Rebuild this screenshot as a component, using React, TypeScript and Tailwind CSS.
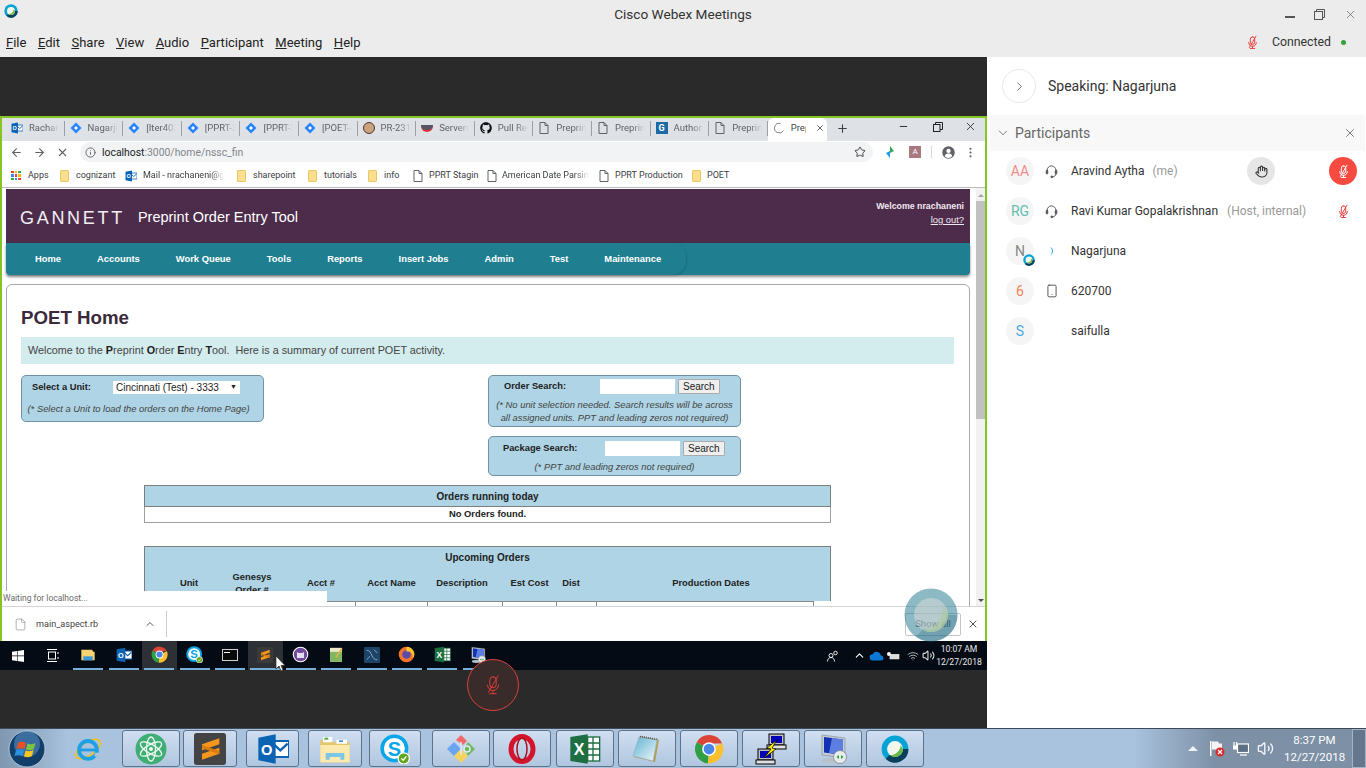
import React from "react";
import { ArrowLeft, ArrowRight, ChevronDown, ChevronRight, ChevronUp, File, Hand, Info, Minus, MoreVertical, Plus, Smartphone, Star, Volume2, Wifi, X } from "lucide-react";
import { FaGithub } from "react-icons/fa";

const ui = "font-['Roboto',sans-serif]";
const ar = "font-['Liberation_Sans',Arial,sans-serif]";

function MutedMic({ className = "", color = "#e8413a", size = 16, sw = 1.6 }: { className?: string; color?: string; size?: number; sw?: number }) {
  return (
    <svg width={size} height={size} viewBox="0 0 24 24" fill="none" stroke={color} strokeWidth={sw} strokeLinecap="round" className={className}>
      <rect x="8.5" y="3" width="7" height="12" rx="3.5" />
      <path d="M6 12a6 6 0 0 0 12 0" />
      <path d="M12 18v3M8.5 21.5h7" />
      <path d="M17.5 2 7 20" />
    </svg>
  );
}
function Headset() {
  return (
    <svg width="15" height="15" viewBox="0 0 24 24" fill="none" stroke="#555" strokeWidth="1.500" strokeLinecap="round">
      <path d="M5 13V10a7 7 0 0 1 14 0v3" />
      <rect x="3.500" y="10" width="2.500" height="6" rx="1.250" fill="#555" />
      <rect x="18" y="10" width="2.500" height="6" rx="1.250" fill="#555" />
      <path d="M19 16c0 3-2.500 4.500-5 4.500" />
      <circle cx="12.500" cy="20.500" r="1.500" fill="#555" />
    </svg>
  );
}
function WebexLogo({ size = 16 }: { size?: number }) {
  return (
    <svg width={size} height={size} viewBox="0 0 24 24">
      <circle cx="12" cy="12" r="11.500" fill="#05a3d6" />
      <path d="M23.500 12A11.500 11.500 0 0 1 4 20.300L8 16.500A6.500 6.500 0 0 0 18.500 12Z" fill="#0a3f5c" />
      <circle cx="12" cy="12" r="6.800" fill="#f4f7ee" />
      <path d="M18.800 12A6.800 6.800 0 0 1 7.500 17.100C11.500 17.500 15.500 15.500 17 9Z" fill="#68b846" />
    </svg>
  );
}
function Outlook({ size = 13 }: { size?: number }) {
  return (
    <svg width={size} height={size} viewBox="0 0 24 24">
      <rect x="11" y="6" width="13" height="12" fill="#fff" stroke="#0a64b4" strokeWidth="1.500" />
      <path d="M12 8l5.500 5L23 8" fill="none" stroke="#0a64b4" strokeWidth="1.800" />
      <path d="M1 3.500 14 1v22L1 20.500Z" fill="#0a64b4" />
      <text x="7.300" y="16.300" textAnchor="middle" fontSize="11" fontWeight="700" fill="#fff" fontFamily="Liberation Sans">O</text>
    </svg>
  );
}
function Jira() {
  return (
    <svg width="12" height="12" viewBox="0 0 24 24">
      <path d="M12 1 23 12 12 23 1 12Z" fill="#2684ff" />
      <path d="M12 8 16 12 12 16 8 12Z" fill="#fff" />
    </svg>
  );
}
function Chrome({ size = 20 }: { size?: number }) {
  return (
    <svg width={size} height={size} viewBox="0 0 24 24">
      <path d="M12 12 2.200 6.500A11.500 11.500 0 0 1 22.500 7.500L12 7.500Z" fill="#db4437" />
      <path d="M12 12 22.500 7.500A11.500 11.500 0 0 1 11 23.500Z" fill="#fbc02d" />
      <path d="M12 12 11 23.500A11.500 11.500 0 0 1 2.200 6.500Z" fill="#2f9e44" />
      <circle cx="12" cy="12" r="5.500" fill="#fff" />
      <circle cx="12" cy="12" r="4.300" fill="#4a86e8" />
    </svg>
  );
}
function Sublime({ size = 16, plate = "#444" }: { size?: number; plate?: string }) {
  return (
    <svg width={size} height={size} viewBox="0 0 24 24">
      <rect x="0" y="0" width="24" height="24" rx="2" fill={plate} />
      <path d="M19 4 6 8.500v4.500l13-4.500ZM19 11 6 15.500V20l13-4.500Z" fill="#f7961d" />
      <path d="M6 9 19 13.500V16L6 11.500Z" fill="#d97b0e" />
    </svg>
  );
}
function Skype({ size = 18 }: { size?: number }) {
  return (
    <span className="relative inline-flex items-center justify-center" style={{ width: size, height: size }}>
      <svg width={size} height={size} viewBox="0 0 24 24">
        <circle cx="11.500" cy="11.500" r="9.800" fill="#fff" stroke="#08a5e8" strokeWidth="2.800" />
        <text x="11.500" y="17.500" textAnchor="middle" fontSize="16" fontWeight="700" fill="#08a5e8" fontFamily="Liberation Sans">S</text>
        <circle cx="19" cy="19.500" r="4.500" fill="#5fa51d" stroke="#fff" strokeWidth="1" />
        <path d="M17 19.500l1.500 1.500 2.500-3" fill="none" stroke="#fff" strokeWidth="1" />
      </svg>
    </span>
  );
}
function Excel({ size = 20 }: { size?: number }) {
  return (
    <svg width={size} height={size} viewBox="0 0 24 24">
      <rect x="11" y="3" width="12" height="18" fill="#fff" stroke="#1d6f42" strokeWidth="1" />
      <path d="M14 3v18M18 3v18M11 7.500h12M11 12h12M11 16.500h12" stroke="#1d6f42" strokeWidth="1" />
      <path d="M1 3 14 1v22L1 21Z" fill="#1d6f42" />
      <text x="7.500" y="16.500" textAnchor="middle" fontSize="12" fontWeight="700" fill="#fff" fontFamily="Liberation Sans">X</text>
    </svg>
  );
}
function Folder({ size = 18 }: { size?: number }) {
  return (
    <svg width={size} height={size} viewBox="0 0 24 24">
      <path d="M1 5h8l2 2h12v15H1Z" fill="#e5c66d" />
      <path d="M3 3h7v4H3ZM13 5h8v3h-8Z" fill="#fff" />
      <rect x="4" y="3.500" width="3" height="1.500" fill="#4cae4c" />
      <rect x="15" y="5.500" width="3" height="1.200" fill="#3b8bd8" />
      <path d="M1 9h22v13H1Z" fill="#fbe9ae" />
      <path d="M5 20v-5h14v5h-3v-2H8v2Z" fill="#7cc7e8" />
    </svg>
  );
}
function BookmarkFolder() {
  return <span className="block w-[9px] h-[12px] bg-[#fbdf8e] border border-[#e6c869] rounded-[1px]" />;
}
function Atom() {
  return (
    <svg width="32" height="32" viewBox="0 0 32 32">
      <circle cx="16" cy="16" r="15.500" fill="#3fae74" />
      <g fill="none" stroke="#eaf7ef" strokeWidth="1.300">
        <ellipse cx="16" cy="16" rx="12" ry="4.500" transform="rotate(30 16 16)" />
        <ellipse cx="16" cy="16" rx="12" ry="4.500" transform="rotate(-30 16 16)" />
        <ellipse cx="16" cy="16" rx="12" ry="4.500" transform="rotate(90 16 16)" />
      </g>
      <circle cx="16" cy="16" r="2" fill="#eaf7ef" />
    </svg>
  );
}
function GitTile() {
  return (
    <svg width="32" height="32" viewBox="0 0 32 32">
      <path d="M2 16 9 9l7 7-7 7Z" fill="#6aa5f2" />
      <path d="M16 2l6 6-4 4-7-5Z" fill="#f06a6a" />
      <path d="M23 9l7 7-7 7-4-7Z" fill="#71b85c" />
      <path d="M9 23l7-7 7 7-7 7Z" fill="#f4d35e" />
      <circle cx="22" cy="16" r="3" fill="none" stroke="#dfeaf4" strokeWidth="1.500" />
      <path d="M16 9v13" stroke="#dfeaf4" strokeWidth="1.500" />
    </svg>
  );
}
function Opera({ size = 30 }: { size?: number }) {
  return (
    <svg width={size} height={size} viewBox="0 0 30 30">
      <ellipse cx="15" cy="15" rx="11" ry="12.500" fill="none" stroke="#d4142a" strokeWidth="5" />
      <ellipse cx="15" cy="15" rx="5" ry="11" fill="none" stroke="#a80f20" strokeWidth="1.500" />
    </svg>
  );
}
function Notepad() {
  return (
    <svg width="32" height="32" viewBox="0 0 32 32">
      <path d="M9 3 28 7 24 29 3 24Z" fill="#b8860b" opacity=".7" />
      <path d="M8 4 26 7 22 28 2 23Z" fill="url(#np)" stroke="#8fb2c4" strokeWidth=".600" />
      <defs><linearGradient id="np" x1="0" y1="0" x2="1" y2="1"><stop stopColor="#5fb2d0" /><stop offset="1" stopColor="#eef7fb" /></linearGradient></defs>
      <path d="M9 3.500 27 6.500" stroke="#555" strokeWidth="1.600" strokeDasharray="1 1" />
    </svg>
  );
}
function Putty() {
  const Box = ({ x, y }: { x: number; y: number }) => (
    <g transform={`translate(${x} ${y})`}>
      <rect x="2" y="0" width="15" height="11" fill="#c0c0c0" stroke="#000" strokeWidth="1" />
      <rect x="4" y="2" width="11" height="7" fill="#0000b8" />
      <rect x="0" y="11" width="19" height="4" fill="#e0e0e0" stroke="#000" strokeWidth="1" />
    </g>
  );
  return (
    <svg width="32" height="32" viewBox="0 0 32 32">
      <Box x={12} y={1} />
      <Box x={1} y={16} />
      <path d="M22 7 12 15l4 1-7 9 12-9-4-1 5-8Z" fill="#ffef00" stroke="#000" strokeWidth=".700" />
    </svg>
  );
}
function Rdp({ size = 32 }: { size?: number }) {
  return (
    <svg width={size} height={size} viewBox="0 0 32 32">
      <path d="M5 2 28 5v20L5 22Z" fill="#c6cdd3" stroke="#7c8791" strokeWidth=".600" />
      <path d="M7 4 26 6.500V22L7 19.500Z" fill="#1231b5" />
      <path d="M15 5 26 6.500V22L12 20Z" fill="#5b7ee0" />
      <ellipse cx="13" cy="27.500" rx="8" ry="2.500" fill="#b9c1c8" />
      <circle cx="23" cy="24" r="6.500" fill="#e8ecea" stroke="#7c8791" strokeWidth=".800" />
      <path d="M19.500 24l2.500-2v4ZM26.500 24 24 22v4Z" fill="#2f9e44" />
    </svg>
  );
}
function Doc() {
  return (
    <svg width="10" height="12" viewBox="0 0 10 12" fill="none" stroke="#5f6368" strokeWidth="1">
      <path d="M1 .500h5l3 3v8H1Z" />
      <path d="M6 .500v3h3" />
    </svg>
  );
}

const tabs: { icon: React.ReactNode; text: string }[] = [
  { icon: <Outlook size={12} />, text: "Rachan" },
  { icon: <Jira />, text: "Nagarju" },
  { icon: <Jira />, text: "[Iter403" },
  { icon: <Jira />, text: "[PPRT-3" },
  { icon: <Jira />, text: "[PPRT-3" },
  { icon: <Jira />, text: "[POET-4" },
  { icon: <span className="block w-[12px] h-[12px] rounded-full bg-[#c9a27e] border border-[#4a3a2c]" />, text: "PR-231" },
  { icon: <span className="block w-[12px] h-[7px] rounded-b-full border-b-2 border-[#d33] bg-[#556]" />, text: "Servers" },
  { icon: <FaGithub size={12} color="#111" />, text: "Pull Rec" },
  { icon: <Doc />, text: "Preprin" },
  { icon: <Doc />, text: "Preprin" },
  { icon: <span className="flex w-[12px] h-[12px] items-center justify-center bg-[#1b6aa5] text-white text-[9px] leading-none font-bold">G</span>, text: "Author" },
  { icon: <Doc />, text: "Preprin" },
];

const bookmarks: { w: string; icon: React.ReactNode; text: string; gap: string; tw?: string }[] = [
  { w: "w-[49px]", icon: <span className="grid grid-cols-3 gap-[1px] w-[10px]">{["#e94235","#fbbc04","#34a853","#4285f4","#e94235","#fbbc04","#34a853","#4285f4","#e94235"].map((c, i) => <span key={i} className="block w-[2.500px] h-[2.500px]" style={{ background: c }} />)}</span>, text: "Apps", gap: "gap-[7px]" },
  { w: "w-[65px]", icon: <BookmarkFolder />, text: "cognizant", gap: "gap-[7px]" },
  { w: "w-[112px]", icon: <Outlook size={12} />, text: "Mail - nrachaneni@g", gap: "gap-[6px]", tw: "[mask-image:linear-gradient(to_right,black_85%,transparent)]" },
  { w: "w-[71px]", icon: <BookmarkFolder />, text: "sharepoint", gap: "gap-[7px]" },
  { w: "w-[60px]", icon: <BookmarkFolder />, text: "tutorials", gap: "gap-[7px]" },
  { w: "w-[45px]", icon: <BookmarkFolder />, text: "info", gap: "gap-[7px]" },
  { w: "w-[74px]", icon: <Doc />, text: "PPRT Stagin", gap: "gap-[6px]" },
  { w: "w-[112px]", icon: <Doc />, text: "American Date Parsin", gap: "gap-[5px]", tw: "[mask-image:linear-gradient(to_right,black_85%,transparent)]" },
  { w: "w-[93px]", icon: <Doc />, text: "PPRT Production", gap: "gap-[6px]" },
  { w: "w-[60px]", icon: <BookmarkFolder />, text: "POET", gap: "gap-[6px]" },
];

const nav = ["Home", "Accounts", "Work Queue", "Tools", "Reports", "Insert Jobs", "Admin", "Test", "Maintenance"];

const cols = "grid grid-cols-[16px_56px_70px_68px_73px_75px_53px_40px_230px]";

function HeaderCell({ children, pr = "" }: { children: React.ReactNode; pr?: string }) {
  return <div className={`text-center ${pr}`}>{children}</div>;
}

function Browser() {
  return (
    <div className="h-[525px] flex flex-col border-t-2 border-x-2 border-[#84c425] bg-white">
      {/* tab strip */}
      <div className={`h-[23px] bg-[#dee1e6] flex items-center pl-[4px] ${ui}`}>
        {tabs.map((t, i) => (
          <div key={i} className="w-[58.600px] h-[15px] mb-[3px] flex items-center pl-[5px] gap-[6px] border-r border-[#9aa0a6]">
            <span className="w-[12px] flex justify-center shrink-0">{t.icon}</span>
            <span className="w-[30px] overflow-hidden whitespace-nowrap text-[9.500px] text-[#5f6368] [mask-image:linear-gradient(to_right,black_60%,transparent)]">{t.text}</span>
          </div>
        ))}
        <div className="w-[59px] h-full pb-[3px] bg-white rounded-t-[6px] flex items-center pl-[5px] gap-[6px]">
          <svg width="12" height="12" viewBox="0 0 12 12" fill="none" stroke="#7a8086" strokeWidth="1"><path d="M7.500 1.500a4.800 4.800 0 1 0 3 7" /></svg>
          <span className="w-[15px] overflow-hidden text-[9.500px] text-[#45494d]">Prep</span>
          <X size={10} color="#444" strokeWidth={2} className="ml-[3px]" />
        </div>
        <Plus size={13} color="#3c4043" className="ml-[9px] mb-[3px]" />
        <div className="ml-auto flex items-center pr-[8px] mb-[6px]">
          <Minus size={11} color="#222" />
          <svg width="10" height="10" viewBox="0 0 10 10" fill="none" stroke="#222" strokeWidth="1" className="ml-[23.500px]"><rect x=".500" y="2.500" width="6.500" height="7" /><path d="M2.500 2.500v-2h7v7H7" /></svg>
          <X size={13} color="#222" strokeWidth={1.500} className="ml-[21.500px]" />
        </div>
      </div>
      {/* toolbar */}
      <div className={`h-[22px] bg-white flex items-center ${ui}`}>
        <div className="w-[78px] flex items-center pl-[8px] gap-[10px] shrink-0">
          <ArrowLeft size={13} color="#5f6368" />
          <ArrowRight size={13} color="#5f6368" />
          <X size={13} color="#5f6368" />
        </div>
        <div className="w-[793px] h-[20px] bg-[#f1f3f4] rounded-full flex items-center pl-[5px] pr-[7px]">
          <Info size={11} color="#5f6368" />
          <span className="ml-[6px] mt-[1px] text-[10.400px] text-[#202124]">localhost<span className="text-[#80868b]">:3000/home/nssc_fin</span></span>
          <Star size={12} color="#444" className="ml-auto" />
        </div>
        <div className="flex items-center flex-1 pl-[12px]">
          <svg width="10" height="12" viewBox="0 0 10 12"><path d="M5 0 9 5 5 7Z" fill="#34a853" /><path d="M5 12 1 7l4-2Z" fill="#1a9be8" /></svg>
          <span className="ml-[14px] w-[12px] h-[12px] bg-[#a87a7f] flex items-center justify-center text-[8px] text-white leading-none">A</span>
          <span className="ml-[10px] w-px h-[12px] bg-[#d8d8d8]" />
          <svg width="13" height="13" viewBox="0 0 24 24" className="ml-[10px]">
            <circle cx="12" cy="12" r="11.500" fill="#5f6368" />
            <circle cx="12" cy="9" r="4" fill="#fff" />
            <path d="M5 19c1-4 4-5 7-5s6 1 7 5a9 9 0 0 1-14 0Z" fill="#fff" />
          </svg>
          <MoreVertical size={13} color="#5f6368" className="ml-[9px]" />
        </div>
      </div>
      {/* bookmarks */}
      <div className={`h-[25px] pt-[1px] bg-white flex items-center pl-[9px] text-[9px] text-[#3c4043] border-b border-[#bbb] ${ui}`}>
        {bookmarks.map((b, i) => (
          <div key={i} className={`${b.w} flex items-center ${b.gap} whitespace-nowrap`}>
            {b.icon}
            <span className={b.tw ?? ""}>{b.text}</span>
          </div>
        ))}
      </div>
      {/* page */}
      <div className="flex-1 min-h-0 relative flex overflow-hidden">
        <Page />
        <div className="w-[9px] shrink-0 bg-[#f1f1f1] flex flex-col items-center">
          <span className="mt-[6px] w-0 h-0 border-x-[3px] border-x-transparent border-b-[3px] border-b-[#a3a3a3]" />
          <span className="mt-[4px] w-full h-[218px] bg-[#c1c1c1]" />
          <span className="mt-auto mb-[4px] w-0 h-0 border-x-[3px] border-x-transparent border-t-[3px] border-t-[#505050]" />
        </div>
        <div className={`absolute left-0 bottom-0 w-[325px] h-[15px] bg-white flex items-center pl-[1px] text-[8.500px] text-[#6a6a6a] z-10 ${ui}`}>Waiting for localhost...</div>
      </div>
      {/* downloads */}
      <div className={`h-[35px] shrink-0 bg-white border-t border-[#d4d4d4] flex items-center ${ui}`}>
        <File size={13} color="#888" strokeWidth={1.200} className="ml-[12px]" />
        <span className="ml-[9px] mt-[2px] text-[9.100px] text-[#444]">main_aspect.rb</span>
        <ChevronUp size={12} color="#555" className="ml-[46px]" />
        <span className="ml-[10px] w-px h-[26px] bg-[#ccc]" />
        <span className="ml-auto w-[56px] h-[23px] border border-[#c5c5c5] rounded-[2px] flex items-center justify-center text-[9.500px] text-[#444]">Show all</span>
        <X size={12} color="#555" strokeWidth={2} className="mx-[6px]" />
      </div>
    </div>
  );
}

function Page() {
  const box = "bg-[#aed4e5] border border-[#6f93a5] rounded-[5px]";
  const tbl = "bg-[#aed4e5] border border-[#7d7d7d]";
  const btn = "h-[15px] px-[4px] bg-[#efefef] border border-[#aaa] rounded-[1px] text-[10px] leading-none text-[#222] flex items-center";
  return (
    <div className={`w-[974px] shrink-0 pl-[4px] pr-[6px] overflow-hidden ${ar}`}>
      <div className="h-[54px] pt-[4px] mt-[1px] bg-[#4d2c4b] flex items-center pl-[14px] pr-[6px]">
        <span className="text-[18px] tracking-[2.700px] text-[#f3eef3] font-light">GANNETT</span>
        <span className="ml-[13px] text-[14.500px] text-white">Preprint Order Entry Tool</span>
        <div className="ml-auto text-right leading-[14px] text-[#f0e8f0] -mt-[11px]">
          <div className="text-[8.800px] font-bold">Welcome nrachaneni</div>
          <div className="text-[9.400px] underline">log out?</div>
        </div>
      </div>
      <div className="h-[32px] bg-[#1f7f91] shadow-[0_2px_3px_rgba(0,0,0,0.45)] rounded-b-[4px]">
        <div className="w-[680px] h-full rounded-r-[14px] shadow-[1px_1px_2px_rgba(0,0,0,0.15)] flex items-center pl-[11px] text-[9.400px] font-bold text-white">
          {nav.map((n) => <span key={n} className="px-[18px] whitespace-nowrap">{n}</span>)}
        </div>
      </div>
      <div className="mt-[9px] border border-[#a8a8a8] rounded-t-[6px] px-[14px] h-[340px]">
        <h1 className="mt-[22px] h-[22px] leading-[22px] text-[18.700px] font-bold text-[#3a2a3a]">POET Home</h1>
        <div className="mt-[8px] w-[933px] h-[27px] bg-[#d3ecee] flex items-center pl-[7px] text-[10.800px] text-[#444]">
          <span>Welcome to the <b className="text-[#222]">P</b>reprint <b className="text-[#222]">O</b>rder <b className="text-[#222]">E</b>ntry <b className="text-[#222]">T</b>ool.&nbsp; Here is a summary of current POET activity.</span>
        </div>
        <div className="mt-[11px] flex items-start text-[#222]">
          <div className={`w-[243px] h-[47px] ${box}`}>
            <div className="flex items-center mt-[5px] h-[13px]">
              <span className="ml-[10px] w-[81px] text-[9.300px] font-bold">Select a Unit:</span>
              <span className="w-[127px] h-[13px] bg-white flex items-center justify-between px-[3px] text-[10px] text-[#222]">Cincinnati (Test) - 3333<span className="text-[7px]">▼</span></span>
            </div>
            <div className="mt-[8px] pr-[8px] text-center text-[9.400px] italic text-[#444]">(* Select a Unit to load the orders on the Home Page)</div>
          </div>
          <div className="ml-[224px] w-[253px] flex flex-col gap-[9px]">
            <div className={`h-[52px] ${box}`}>
              <div className="flex items-center mt-[3px] h-[15px]">
                <span className="ml-[15px] w-[96px] text-[9.300px] font-bold">Order Search:</span>
                <span className="w-[75px] h-[15px] bg-white" />
                <span className={`ml-[3px] ${btn}`}>Search</span>
              </div>
              <div className="mt-[4px] text-center text-[9.400px] leading-[13px] italic text-[#444] whitespace-nowrap">(* No unit selection needed. Search results will be across<br />all assigned units. PPT and leading zeros not required)</div>
            </div>
            <div className={`h-[40px] ${box}`}>
              <div className="flex items-center mt-[4px] h-[15px]">
                <span className="ml-[14px] w-[102px] text-[9.300px] font-bold">Package Search:</span>
                <span className="w-[75px] h-[15px] bg-white" />
                <span className={`ml-[3px] ${btn}`}>Search</span>
              </div>
              <div className="mt-[4px] text-center text-[9.400px] leading-[13px] italic text-[#444]">(* PPT and leading zeros not required)</div>
            </div>
          </div>
        </div>
        <div className="mt-[9px] ml-[123px] w-[687px] text-[9.400px] font-bold text-[#222]">
          <div className={`${tbl} h-[22px] flex items-center justify-center text-[10px]`}>Orders running today</div>
          <div className="h-[16px] bg-white border-x border-b border-[#a0a0a0] flex items-center justify-center">No Orders found.</div>
          <div className={`mt-[23px] ${tbl} border-b-0 h-[55px]`}>
            <div className="h-[21px] flex items-center justify-center text-[10px]">Upcoming Orders</div>
            <div className={`${cols} items-center h-[29px] leading-[13px]`}>
              <span />
              <HeaderCell>Unit</HeaderCell>
              <HeaderCell>Genesys<br />Order #</HeaderCell>
              <HeaderCell>Acct #</HeaderCell>
              <HeaderCell>Acct Name</HeaderCell>
              <HeaderCell pr="pr-[7px]">Description</HeaderCell>
              <HeaderCell>Est Cost</HeaderCell>
              <HeaderCell pr="pr-[10px]">Dist</HeaderCell>
              <HeaderCell>Production Dates</HeaderCell>
            </div>
          </div>
          <div className="grid grid-cols-[16px_56px_70px_69px_72px_75px_54px_40px_218px] h-[6px]">
            <span />
            {[0, 1, 2, 3, 4, 5, 6].map((i) => <span key={i} className="border-l border-t border-[#888]" />)}
            <span className="border-x border-t border-[#888]" />
          </div>
        </div>
      </div>
    </div>
  );
}

const remoteApps: { icon: React.ReactNode; active?: boolean; label?: string }[] = [
  { icon: <svg width="16" height="14" viewBox="0 0 24 20"><path d="M2 2h16l2 3h2v13H2Z" fill="#f4d370" /><path d="M5 18v-6h14v6" fill="#3b9ad9" /></svg> },
  { icon: <Outlook size={16} /> },
  { icon: <Chrome size={17} />, active: true },
  { icon: <Skype size={17} /> },
  { icon: <span className="block w-[16px] h-[12px] bg-[#0a0a0a] border border-[#cfcfcf]"><span className="block w-[6px] h-[1px] bg-white mt-[2px] ml-[1px]" /></span> },
  { icon: <Sublime size={16} plate="#3a3a3a" />, active: true },
  { icon: <svg width="17" height="17" viewBox="0 0 24 24"><circle cx="12" cy="12" r="11" fill="#fff" /><circle cx="12" cy="12" r="9.500" fill="#6f4a9a" /><path d="M7 8l2 2h6l2-2v9H7Z" fill="#e6def2" /></svg> },
  { icon: <svg width="16" height="17" viewBox="0 0 24 24"><rect x="3" y="2" width="18" height="21" fill="#eee9c8" /><rect x="3" y="8" width="18" height="15" fill="#7fb860" /><path d="M12 16 21 3" stroke="#e0b44a" strokeWidth="2.500" /></svg> },
  { icon: <svg width="16" height="16" viewBox="0 0 24 24"><rect width="24" height="24" rx="2" fill="#1d4466" /><path d="M4 5c5 0 6 4 8 8s3 6 8 6M15 4l5 5M4 19l5-5" stroke="#8fb4d6" strokeWidth="1.300" fill="none" /></svg> },
  { icon: <svg width="17" height="17" viewBox="0 0 24 24"><circle cx="12" cy="12" r="11" fill="#f2742b" /><circle cx="12" cy="12" r="6" fill="#5d4ba8" /><path d="M12 1a11 11 0 0 1 11 11c0 3-1 4-2 5 0-6-3-10-9-9Z" fill="#ffc52f" /></svg> },
  { icon: <Excel size={17} /> },
  { icon: <Rdp size={18} /> },
];

function RemoteTaskbar() {
  return (
    <div className={`h-[29px] bg-[#050b14] flex items-stretch pr-[4px] ${ui}`}>
      <div className="w-[35.400px] flex items-center justify-center">
        <svg width="12" height="12" viewBox="0 0 12 12" fill="#fff"><path d="M0 1.700 5 1v4.600H0ZM5.600.9 12 0v5.600H5.600ZM0 6.200h5v4.700l-5-.7ZM5.600 6.200H12V12l-6.400-.9Z" /></svg>
      </div>
      <div className="w-[35.400px] flex items-center justify-center">
        <svg width="13" height="13" viewBox="0 0 13 13" fill="none" stroke="#fff" strokeWidth="1"><rect x="1.500" y="3" width="7" height="7" /><path d="M0 .5h10M0 12.500h10M11 3v2M11 8v2" /></svg>
      </div>
      {remoteApps.map((a, i) => (
        <div key={i} className={`w-[35.400px] flex flex-col items-center ${a.active ? "bg-[#2d3035]" : ""}`}>
          <div className="flex-1 flex items-center justify-center">{a.icon}</div>
          <span className="w-[30px] h-[2px] bg-[#76b0d8]" />
        </div>
      ))}
      <div className="ml-auto flex items-center text-white">
        <svg width="12" height="12" viewBox="0 0 24 24" fill="none" stroke="#fff" strokeWidth="1.800" className="mr-[14px]"><circle cx="8" cy="11" r="4" /><path d="M1 23c0-5 3-8 7-8s7 3 7 8" /><circle cx="17" cy="6" r="3.500" /></svg>
        <ChevronUp size={13} color="#fff" className="mr-[3px]" />
        <svg width="15" height="10" viewBox="0 0 24 16" className="mr-[3px]"><path d="M6 15a5 5 0 0 1 0-10 7 7 0 0 1 13 2 4 4 0 0 1 0 8Z" fill="#0a78d4" /></svg>
        <svg width="13" height="10" viewBox="0 0 20 14" className="mr-[7px]"><rect x="4" y="4" width="15" height="8" fill="#ddd" /><circle cx="3" cy="4" r="3" fill="#fff" /></svg>
        <Wifi size={12} color="#aaa" className="mr-[3px]" />
        <Volume2 size={13} color="#ddd" />
        <div className="w-[48px] text-center text-[8.600px] leading-[13px] text-[#e8e8e8]">
          <div>10:07 AM</div>
          <div>12/27/2018</div>
        </div>
      </div>
    </div>
  );
}

const people: { initials: string; color: string; status?: React.ReactNode; name: string; note?: string; noteMl?: string; trailing?: React.ReactNode; badge?: boolean }[] = [
  {
    initials: "AA", color: "text-[#f28d8d]", status: <Headset />, name: "Aravind Aytha", note: "(me)", noteMl: "ml-[8px]",
    trailing: (
      <>
        <span className="absolute left-[260px] w-[28px] h-[28px] rounded-full bg-[#e6e6e6] flex items-center justify-center"><Hand size={13} color="#333" /></span>
        <span className="absolute right-[9px] w-[28px] h-[28px] rounded-full bg-[#f74a40] flex items-center justify-center"><MutedMic color="#fff" size={15} /></span>
      </>
    ),
  },
  {
    initials: "RG", color: "text-[#63bfae]", status: <Headset />, name: "Ravi Kumar Gopalakrishnan", note: "(Host, internal)", noteMl: "ml-[9px]",
    trailing: <span className="absolute right-[15px]"><MutedMic size={15} /></span>,
  },
  { initials: "N", color: "text-[#888]", status: <svg width="4" height="8" viewBox="0 0 4 8" fill="none" stroke="#1aa1e6" strokeWidth="1"><path d="M1 .5c2 2 2 5 0 7" /></svg>, name: "Nagarjuna", badge: true },
  { initials: "6", color: "text-[#f2825a]", status: <Smartphone size={14} color="#444" strokeWidth={1.500} />, name: "620700" },
  { initials: "S", color: "text-[#4aa8e0]", name: "saifulla" },
];

function RightPanel() {
  return (
    <div className={`w-[379px] bg-white ${ui}`}>
      <div className="h-[58px] flex items-center pl-[15px]">
        <span className="w-[34px] h-[34px] rounded-full border border-[#e8e8e8] flex items-center justify-center">
          <ChevronRight size={15} color="#555" strokeWidth={1.300} />
        </span>
        <span className="ml-[12px] text-[14px] text-[#333]">Speaking: Nagarjuna</span>
      </div>
      <div className="h-[36px] ml-[3px] mr-[1px] bg-[#f8f8f8] flex items-center pl-[6px] pr-[8px]">
        <ChevronDown size={14} color="#555" strokeWidth={1.300} />
        <span className="ml-[5px] mt-[1px] text-[14px] text-[#666]">Participants</span>
        <X size={14} color="#555" strokeWidth={1.300} className="ml-auto" />
      </div>
      <div>
        {people.map((p) => (
          <div key={p.name} className="relative h-[40px] flex items-center pl-[19px]">
            <span className="relative w-[28px] h-[28px] rounded-full bg-[#f5f5f5] flex items-center justify-center shrink-0">
              <span className={`text-[14px] ${p.color}`}>{p.initials}</span>
              {p.badge && <span className="absolute -right-[1px] -bottom-[1px] flex"><WebexLogo size={12} /></span>}
            </span>
            <span className="w-[15px] ml-[10px] flex justify-center shrink-0">{p.status}</span>
            <span className="ml-[12px] text-[12px] text-[#333] whitespace-nowrap">{p.name}</span>
            {p.note && <span className={`${p.noteMl} text-[12px] text-[#999] whitespace-nowrap`}>{p.note}</span>}
            {p.trailing}
          </div>
        ))}
      </div>
    </div>
  );
}

const winApps: { ml: string; w: string; icon: React.ReactNode; active?: boolean }[] = [
  { ml: "ml-[0px]", w: "w-[58px]", icon: <Atom /> },
  { ml: "ml-[3px]", w: "w-[54px]", icon: <Sublime size={32} /> },
  { ml: "ml-[9px]", w: "w-[53px]", icon: <Outlook size={32} /> },
  { ml: "ml-[9px]", w: "w-[54px]", icon: <Folder size={32} /> },
  { ml: "ml-[7px]", w: "w-[52px]", icon: <Skype size={30} /> },
  { ml: "ml-[11px]", w: "w-[58px]", icon: <GitTile /> },
  { ml: "ml-[3px]", w: "w-[58px]", icon: <Opera /> },
  { ml: "ml-[5px]", w: "w-[58px]", icon: <Excel size={32} /> },
  { ml: "ml-[4px]", w: "w-[58px]", icon: <Notepad /> },
  { ml: "ml-[4px]", w: "w-[58px]", icon: <Chrome size={30} /> },
  { ml: "ml-[4px]", w: "w-[58px]", icon: <Putty /> },
  { ml: "ml-[4px]", w: "w-[58px]", icon: <Rdp /> },
  { ml: "ml-[4px]", w: "w-[58px]", icon: <WebexLogo size={28} />, active: true },
];

function WinTaskbar() {
  return (
    <div className={`h-[40px] flex items-stretch border-t border-[#3e4a58] bg-[linear-gradient(to_right,#7f97b0_0%,#a9c2dd_5%,#a9c2dd_83%,#7d90a6_89%,#7d90a6_100%)] ${ui}`}>
      <div className="w-[122px] flex items-center shrink-0 pl-[8px]">
        <svg width="38" height="38" viewBox="0 0 38 38">
          <circle cx="19" cy="19" r="18" fill="#123f6a" stroke="#c9d5e2" strokeWidth=".800" />
          <circle cx="19" cy="14" r="13" fill="#5b95c9" opacity=".55" />
          <path d="M10 13c3-2 5-1 8 0l-1.500 6c-3-1-5-1-8 0Z" fill="#e8502a" />
          <path d="M19.500 13.500c3 1 5 1 8-.5l-1.500 6c-3 1.500-5 1.500-8 .5Z" fill="#7cc242" />
          <path d="M8 20c3-1 5-1 8 0l-1.500 6c-3-1-5-1-8 0Z" fill="#2d8fe0" />
          <path d="M17.500 20.500c3 1 5 1 8-.5l-1.500 6c-3 1.500-5 1.500-8 .5Z" fill="#f6c51e" />
        </svg>
        <span className="ml-[26px] relative flex items-center justify-center w-[32px] h-[32px]">
          <svg width="34" height="34" viewBox="0 0 34 34" fill="none">
            <ellipse cx="17" cy="17" rx="15" ry="7" transform="rotate(-35 17 17)" stroke="#f3c213" strokeWidth="1.800" />
            <circle cx="17" cy="18" r="9.500" stroke="#1ea0e6" strokeWidth="4" />
            <path d="M8 18h18" stroke="#1ea0e6" strokeWidth="3" />
            <path d="M24 23h5" stroke="#a9c2dd" strokeWidth="4" />
          </svg>
        </span>
      </div>
      {winApps.map((a, i) => (
        <div key={i} className={`${a.ml} ${a.w} my-[1px] flex items-center justify-center rounded-[3px] border border-[#5f7288] bg-[linear-gradient(to_bottom,#d0def0,#b0c6df)] shrink-0`}>
          {a.icon}
        </div>
      ))}
      <div className="ml-auto flex items-center">
        <span className="w-0 h-0 border-x-[5px] border-x-transparent border-b-[5px] border-b-[#eef2f6] mr-[11px]" />
        <svg width="16" height="17" viewBox="0 0 16 17" className="mr-[8px]">
          <rect x="1" y="1" width="1.500" height="15" fill="#fff" />
          <path d="M3 1.500h6l1 2h3v6H3Z" fill="#f4f4f4" />
          <circle cx="11" cy="12" r="4.500" fill="#d92b2b" />
          <path d="M9 10l4 4M13 10l-4 4" stroke="#fff" strokeWidth="1.200" />
        </svg>
        <svg width="16" height="15" viewBox="0 0 16 15" className="mr-[8px]" fill="none" stroke="#fff" strokeWidth="1.200">
          <rect x="4.500" y="3" width="11" height="8.500" fill="#5c6f83" />
          <path d="M7 14h7" />
          <path d="M1 1v4M3.500 1v4M.5 5h3.500v3H.5z" fill="#fff" />
        </svg>
        <Volume2 size={17} color="#eef2f6" className="mr-[10px]" />
        <div className="w-[61px] text-center text-[11.500px] leading-[17px] text-white">
          <div>8:37 PM</div>
          <div className="whitespace-nowrap">12/27/2018</div>
        </div>
        <span className="ml-[7px] w-[14px] h-full border border-[#a5b3c2] bg-[#65778c]" />
      </div>
    </div>
  );
}

export default function App() {
  return (
    <div className="w-[1366px] h-[768px] flex flex-col overflow-hidden bg-[#2a2a2a] relative">
      {/* title bar */}
      <div className={`h-[57px] bg-[#ececec] text-[#222] shrink-0 ${ui}`}>
        <div className="h-[28px] grid grid-cols-[1fr_auto_1fr] items-center">
          <div className="pl-[4px] pb-[7px]"><WebexLogo size={14} /></div>
          <div className="pt-[1px] text-[13.600px] text-[#333]">Cisco Webex Meetings</div>
          <div className="flex items-center justify-end gap-[19px] pr-[9px]">
            <span className="w-[10px] h-[2px] bg-[#555] mt-[5px]" />
            <svg width="11" height="11" viewBox="0 0 11 11" fill="none" stroke="#555" strokeWidth="1"><rect x=".500" y="2.500" width="8" height="8" /><path d="M2.500 2.500v-2h8v8h-2" /></svg>
            <X size={13} color="#555" strokeWidth={1.200} />
          </div>
        </div>
        <div className="h-[29px] flex items-center pl-[6px] pt-[1px] text-[13px]">
          {[["F", "ile"], ["E", "dit"], ["S", "hare"], ["V", "iew"], ["A", "udio"], ["P", "articipant"], ["M", "eeting"], ["H", "elp"]].map(([u, r]) => (
            <span key={u} className="mr-[11.500px]"><span className="underline">{u}</span>{r}</span>
          ))}
          <div className="ml-auto flex items-center pb-[2px]">
            <MutedMic size={15} />
            <span className="ml-[12px] text-[12.300px] text-[#333]">Connected</span>
            <span className="ml-[10px] mr-[20px] w-[5px] h-[5px] rounded-full bg-[#34a23a]" />
          </div>
        </div>
      </div>
      {/* main */}
      <div className="h-[671px] flex shrink-0">
        <div className="w-[987px] relative pt-[59px] bg-[#2a2a2a]">
          <Browser />
          <RemoteTaskbar />
          <svg width="12" height="17" viewBox="0 0 12 17" className="absolute left-[275px] top-[598px]"><path d="M1 1v13l3-3 2 5 2-1-2-4.500h4Z" fill="#fff" stroke="#222" strokeWidth=".700" /></svg>
          <div className="absolute left-[467px] top-[602px] w-[52px] h-[52px] rounded-full border border-[#d8413a] bg-[#3a2b2b] flex items-center justify-center">
            <MutedMic size={22} sw={1} />
          </div>
          <svg width="54" height="54" viewBox="0 0 54 54" className="absolute left-[904px] top-[531px]">
            <circle cx="27" cy="27" r="26.500" fill="#2f7f95" fillOpacity=".55" />
            <path d="M53.500 27A26.500 26.500 0 0 1 12 49L20 40A15 15 0 0 0 42 27Z" fill="#1f5a75" fillOpacity=".25" />
            <circle cx="27" cy="27" r="17" fill="#e6e2d8" fillOpacity=".45" />
            <path d="M44 27A17 17 0 0 1 18 41.500C28 42 38 36 40 17Z" fill="#a9c98a" fillOpacity=".45" />
          </svg>
        </div>
        <RightPanel />
      </div>
      <WinTaskbar />
    </div>
  );
}
